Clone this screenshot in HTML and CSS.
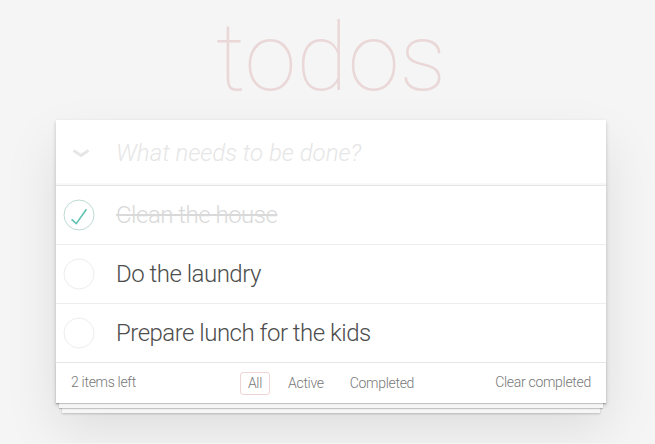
FILE: index.html
```html
<!DOCTYPE html>
<html lang="en">
<head>
<meta charset="utf-8">
<title>todos</title>
<link rel="stylesheet" href="styles.css">
</head>
<body>
<section class="todoapp">
  <h1 class="title">todos</h1>
  <div class="card">
    <header class="header">
      <span class="toggle-all">
        <svg width="18" height="8" viewBox="0 0 18 8"><polyline points="1.5,1.5 9,6.5 16.5,1.5" fill="none" stroke="#e6e6e6" stroke-width="3"/></svg>
      </span>
      <input class="new-todo" placeholder="What needs to be done?">
    </header>
    <ul class="todo-list">
      <li class="todo completed">
        <span class="check">
          <svg width="32" height="32" viewBox="0 0 32 32"><circle cx="16" cy="16" r="15" fill="none" stroke="#bddad5" stroke-width="1"/><path d="M8.6 20.4 L13.3 24.6 L23.4 10.2" fill="none" stroke="#5dc2af" stroke-width="1.6"/></svg>
        </span>
        <label class="label">Clean the house</label>
      </li>
      <li class="todo">
        <span class="check">
          <svg width="32" height="32" viewBox="0 0 32 32"><circle cx="16" cy="16" r="15" fill="none" stroke="#ededed" stroke-width="1"/></svg>
        </span>
        <label class="label">Do the laundry</label>
      </li>
      <li class="todo">
        <span class="check">
          <svg width="32" height="32" viewBox="0 0 32 32"><circle cx="16" cy="16" r="15" fill="none" stroke="#ededed" stroke-width="1"/></svg>
        </span>
        <label class="label">Prepare lunch for the kids</label>
      </li>
    </ul>
    <footer class="footer">
      <span class="todo-count">2 items left</span>
      <ul class="filters">
        <li><a class="filter selected">All</a></li>
        <li><a class="filter">Active</a></li>
        <li><a class="filter">Completed</a></li>
      </ul>
      <span class="clear">Clear completed</span>
    </footer>
  </div>
</section>
</body>
</html>
```
FILE: styles.css
```css
html, body {
  margin: 0;
  padding: 0;
}
body {
  background: #f5f5f5;
  color: #4d4d4d;
  font-family: Roboto, "Liberation Sans", Arial, sans-serif;
  font-weight: 300;
  font-size: 14px;
  line-height: 1.4em;
  -webkit-font-smoothing: antialiased;
}
.todoapp {
  width: 550px;
  margin: 0 0 40px 56px;
}
.title {
  margin: 0 0 5px;
  padding-top: 2px;
  font-size: 94px;
  line-height: 113px;
  font-weight: 100;
  text-align: center;
  color: rgba(175, 47, 47, 0.15);
}
.card {
  background: #fff;
  box-shadow: 0 2px 4px 0 rgba(0, 0, 0, 0.2), 0 25px 50px 0 rgba(0, 0, 0, 0.1);
}
.header {
  display: flex;
  align-items: center;
  height: 65px;
  box-shadow: inset 0 -2px 1px rgba(0, 0, 0, 0.03);
}
.toggle-all {
  width: 60px;
  display: flex;
  padding-left: 15.5px;
  padding-top: 1px;
  box-sizing: border-box;
}
.toggle-all svg { display: block; }
.new-todo {
  flex: 1;
  min-width: 0;
  border: 0;
  outline: none;
  background: transparent;
  padding: 0 16px 0 0;
  font-family: inherit;
  font-size: 24px;
  font-weight: 300;
  line-height: 1.4em;
  height: 65px;
  box-sizing: border-box;
  color: inherit;
}
.new-todo::placeholder {
  font-style: italic;
  font-weight: 300;
  color: #e6e6e6;
}
.todo-list {
  margin: 0;
  padding: 0;
  list-style: none;
  border-top: 1px solid #e6e6e6;
}
.todo {
  display: flex;
  align-items: center;
  height: 58px;
  border-bottom: 1px solid #ededed;
}
.todo:last-child {
  border-bottom: none;
}
.check {
  width: 60px;
  display: flex;
  padding-left: 7px;
  box-sizing: border-box;
}
.check svg { display: block; }
.label {
  padding: 0 15px 0 0;
  font-size: 24px;
  line-height: 1.2;
  font-weight: 300;
  letter-spacing: -0.5px;
  word-break: break-all;
}
.completed .label {
  color: #d9d9d9;
  text-decoration: line-through;
}
.footer {
  display: grid;
  grid-template-columns: 1fr auto 1fr;
  align-items: center;
  color: #777;
  padding: 0 15px;
  height: 40px;
  letter-spacing: -0.3px;
  border-top: 1px solid #e6e6e6;
  box-shadow: 0 1px 1px rgba(0, 0, 0, 0.2), 0 8px 0 -3px #f6f6f6, 0 9px 1px -3px rgba(0, 0, 0, 0.2), 0 16px 0 -6px #f6f6f6, 0 17px 2px -6px rgba(0, 0, 0, 0.2);
}
.todo-count {
  text-align: left;
}
.filters {
  display: flex;
  gap: 4px;
  margin: 0;
  padding: 0;
  list-style: none;
}
.filter {
  display: block;
  margin: 0 3px;
  padding: 3px 7px;
  border: 1px solid transparent;
  border-radius: 3px;
  color: inherit;
  line-height: 15px;
}
.filter.selected {
  border-color: rgba(175, 47, 47, 0.2);
}
.clear {
  text-align: right;
}
```
